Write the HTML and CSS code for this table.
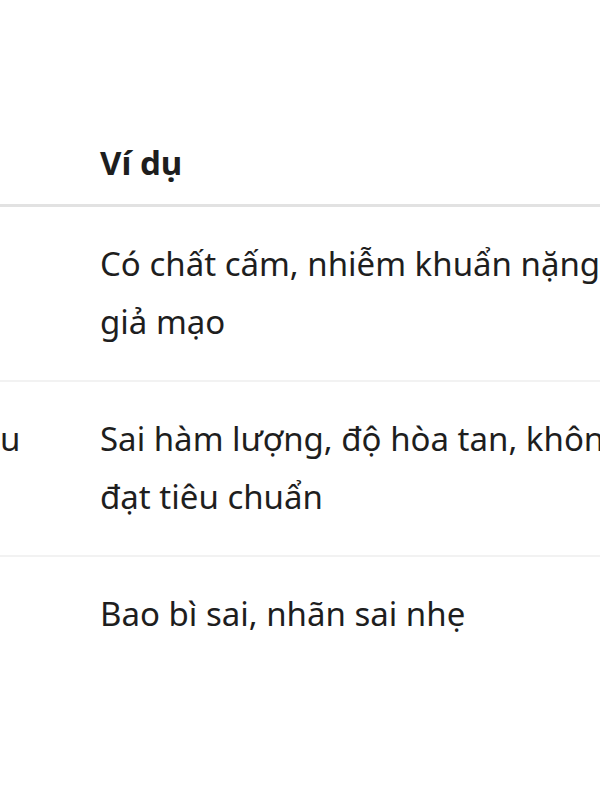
FILE: index.html
```html
<!DOCTYPE html>
<html lang="vi">
<head>
<meta charset="utf-8">
<link rel="stylesheet" href="styles.css">
</head>
<body>
<table class="grid">
  <thead>
    <tr><th class="c1"></th><th class="c2">Ví dụ</th></tr>
  </thead>
  <tbody>
    <tr><td class="c1"></td><td class="c2">Có chất cấm, nhiễm khuẩn nặng, giả mạo</td></tr>
    <tr><td class="c1">u</td><td class="c2">Sai hàm lượng, độ hòa tan, không đạt tiêu chuẩn</td></tr>
    <tr><td class="c1"></td><td class="c2">Bao bì sai, nhãn sai nhẹ</td></tr>
  </tbody>
</table>
</body>
</html>
```
FILE: styles.css
```css
html, body {
  margin: 0;
  background: #fff;
  overflow: hidden;
}
body {
  padding-top: 120px;
  font-family: "Noto Sans", "Open Sans", sans-serif;
  color: #1e1e1e;
  font-size: 33px;
}
.grid {
  border-collapse: collapse;
  width: 640px;
  table-layout: fixed;
}
.grid th, .grid td {
  text-align: left;
  vertical-align: top;
  line-height: 58px;
}
.grid th {
  font-weight: 700;
  padding: 14px 0 12px;
  border-bottom: 3px solid #e2e2e2;
}
.grid td {
  padding: 28px 0 29px;
  border-bottom: 2px solid #f2f2f2;
}
.grid tbody tr:last-child td {
  border-bottom: none;
}
.c1 { width: 100px; }
.c2 { width: 540px; }
```
